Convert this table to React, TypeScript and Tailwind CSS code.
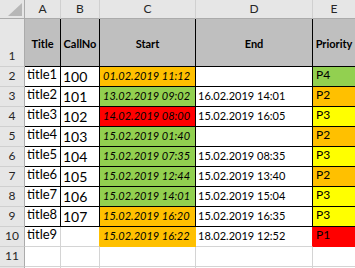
import React from "react";

type Row = {
  n: string;
  title: string;
  call: string;
  start: string;
  startBg: string;
  end: string;
  pri: string;
  priBg: string;
};

const ORANGE = "bg-[#ffc000]";
const GREEN = "bg-[#92d050]";
const RED = "bg-[#ff0000]";
const YELLOW = "bg-[#ffff00]";

const rows: Row[] = [
  { n: "2", title: "title1", call: "100", start: "01.02.2019 11:12", startBg: ORANGE, end: "", pri: "P4", priBg: GREEN },
  { n: "3", title: "title2", call: "101", start: "13.02.2019 09:02", startBg: GREEN, end: "16.02.2019 14:01", pri: "P2", priBg: ORANGE },
  { n: "4", title: "title3", call: "102", start: "14.02.2019 08:00", startBg: RED, end: "15.02.2019 16:05", pri: "P3", priBg: YELLOW },
  { n: "5", title: "title4", call: "103", start: "15.02.2019 01:40", startBg: GREEN, end: "", pri: "P2", priBg: ORANGE },
  { n: "6", title: "title5", call: "104", start: "15.02.2019 07:35", startBg: GREEN, end: "15.02.2019 08:35", pri: "P3", priBg: YELLOW },
  { n: "7", title: "title6", call: "105", start: "15.02.2019 12:44", startBg: GREEN, end: "15.02.2019 13:40", pri: "P2", priBg: ORANGE },
  { n: "8", title: "title7", call: "106", start: "15.02.2019 14:01", startBg: GREEN, end: "15.02.2019 15:04", pri: "P3", priBg: YELLOW },
  { n: "9", title: "title8", call: "107", start: "15.02.2019 16:20", startBg: ORANGE, end: "15.02.2019 16:35", pri: "P3", priBg: YELLOW },
];

const CELL = "flex overflow-hidden whitespace-nowrap border-r border-b";
const HEAD = "bg-[#e6e6e6] text-[#262626] text-[12px] leading-none";

function ColHead({ children }: { children?: React.ReactNode }) {
  return (
    <div className={`${CELL} ${HEAD} items-center justify-center border-b-[#ababab] border-r-[#d0d0d0]`}>
      {children}
    </div>
  );
}

function RowHead({ n }: { n?: string }) {
  return (
    <div className={`${CELL} ${HEAD} items-end justify-center pb-[4px] border-r-[#ababab] border-b-[#d0d0d0]`}>
      {n}
    </div>
  );
}

function HeaderCell({ children }: { children: React.ReactNode }) {
  return (
    <div className={`${CELL} items-center justify-center bg-[#bfbfbf] border-black text-[11px] font-bold text-black leading-none pt-[2px]`}>
      {children}
    </div>
  );
}

export default function App() {
  return (
    <div className="w-[355px] h-[268px] overflow-hidden bg-white font-['Lato',sans-serif]">
      <div className="grid grid-cols-[25px_36px_39px_96px_117px_43px] grid-rows-[19px_48px_repeat(11,20px)] w-[356px]">
        {/* corner */}
        <div className="relative bg-[#e6e6e6] border-r border-b border-r-[#ababab] border-b-[#ababab]">
          <svg className="absolute left-[8px] top-[3px]" width="15" height="13" viewBox="0 0 15 13">
            <polygon points="14,0 14,13 0,13" fill="#b7b7b7" />
          </svg>
        </div>
        <ColHead>A</ColHead>
        <ColHead>B</ColHead>
        <ColHead>C</ColHead>
        <ColHead>D</ColHead>
        <ColHead>E</ColHead>

        {/* row 1 */}
        <RowHead n="1" />
        <HeaderCell>Title</HeaderCell>
        <HeaderCell>CallNo</HeaderCell>
        <HeaderCell>Start</HeaderCell>
        <HeaderCell>End</HeaderCell>
        <HeaderCell>Priority</HeaderCell>

        {rows.map((r) => (
          <React.Fragment key={r.n}>
            <RowHead n={r.n} />
            <div className={`${CELL} items-end border-black pl-[2px] pb-[5px] text-[13px] leading-none text-black`}>
              {r.title}
            </div>
            <div className={`${CELL} items-end border-black pl-[2px] pb-[2px] text-[14px] leading-none text-black`}>
              {r.call}
            </div>
            <div className={`${CELL} ${r.startBg} items-end border-black pl-[3px] pb-[5px] text-[11px] italic leading-none text-black`}>
              {r.start}
            </div>
            <div className={`${CELL} items-end border-black pl-[2px] pb-[5px] text-[11px] leading-none text-black`}>
              {r.end}
            </div>
            <div className={`${CELL} ${r.priBg} items-end border-black pl-[3px] pb-[5px] text-[12px] leading-none text-black`}>
              {r.pri}
            </div>
          </React.Fragment>
        ))}

        {/* row 10 */}
        <RowHead n="10" />
        <div className={`${CELL} items-end border-[#d4d4d4] pl-[2px] pb-[5px] text-[13px] leading-none text-black`}>
          title9
        </div>
        <div className={`${CELL} border-r-[#ffc000] border-b-[#d4d4d4]`} />
        <div className={`${CELL} ${ORANGE} items-end border-[#ffc000] pl-[3px] pb-[5px] text-[11px] italic leading-none text-black`}>
          15.02.2019 16:22
        </div>
        <div className={`${CELL} items-end border-r-[#ff0000] border-b-[#d4d4d4] pl-[2px] pb-[5px] text-[11px] leading-none text-black`}>
          18.02.2019 12:52
        </div>
        <div className={`${CELL} ${RED} items-end border-[#ff0000] pl-[3px] pb-[5px] text-[12px] leading-none text-black`}>
          P1
        </div>

        {/* row 11 */}
        <RowHead n="11" />
        <div className={`${CELL} border-[#d4d4d4]`} />
        <div className={`${CELL} border-[#d4d4d4]`} />
        <div className={`${CELL} border-[#d4d4d4]`} />
        <div className={`${CELL} border-[#d4d4d4]`} />
        <div className={`${CELL} border-[#d4d4d4]`} />

        {/* row 12 (clipped) */}
        <RowHead />
        <div className={`${CELL} border-[#d4d4d4]`} />
        <div className={`${CELL} border-[#d4d4d4]`} />
        <div className={`${CELL} border-[#d4d4d4]`} />
        <div className={`${CELL} border-[#d4d4d4]`} />
        <div className={`${CELL} border-[#d4d4d4]`} />
      </div>
    </div>
  );
}
